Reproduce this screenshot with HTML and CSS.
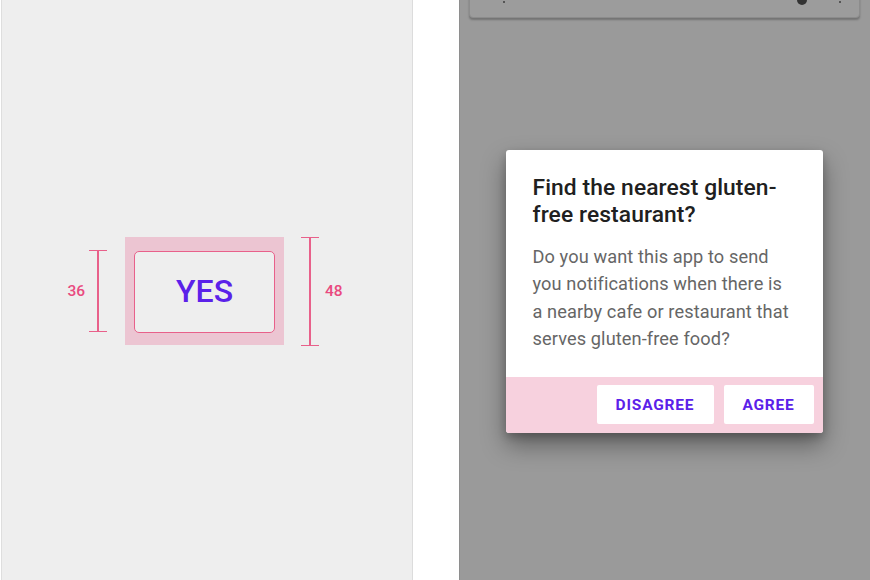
FILE: index.html
```html
<!DOCTYPE html>
<html>
<head>
<meta charset="utf-8">
<link rel="stylesheet" href="styles.css">
</head>
<body>
<div class="page">
  <section class="left">
    <div class="spec">
      <div class="measure m36">
        <span class="label">36</span>
        <div class="bracket b36"></div>
      </div>
      <div class="target">
        <div class="yes">YES</div>
      </div>
      <div class="measure m48">
        <div class="bracket b48"></div>
        <span class="label">48</span>
      </div>
    </div>
  </section>
  <div class="gap"></div>
  <section class="right">
    <div class="searchbar">
      <span class="dot d1"></span>
      <span class="mic"></span>
      <span class="dot d2"></span>
    </div>
    <div class="dialog">
      <div class="dlg-body">
        <h1 class="title">Find the nearest gluten-free restaurant?</h1>
        <p class="text">Do you want this app to send you notifications when there is a nearby cafe or restaurant that serves gluten-free food?</p>
      </div>
      <div class="actions">
        <button class="btn btn-dis">DISAGREE</button>
        <button class="btn btn-agree">AGREE</button>
      </div>
    </div>
  </section>
</div>
</body>
</html>
```
FILE: styles.css
```css
* { box-sizing: border-box; }
html, body { margin: 0; padding: 0; }
body {
  width: 870px;
  height: 580px;
  overflow: hidden;
  background: #ffffff;
  font-family: Roboto, "Liberation Sans", sans-serif;
}
.page {
  display: flex;
  height: 580px;
}
.left {
  width: 412px;
  margin-left: 1px;
  background: #eeeeee;
  border-left: 1px solid #dedede;
  border-right: 1px solid #dcdcdc;
  display: flex;
  align-items: center;
  justify-content: center;
}
.spec {
  display: flex;
  align-items: center;
  margin-top: 2px;
  margin-left: -4px;
}
.measure {
  display: flex;
  align-items: center;
  gap: 4px;
}
.label {
  color: #e94a7f;
  font-size: 15.5px;
  font-weight: 500;
}
.bracket {
  width: 18px;
  border-top: 1.5px solid #e8608a;
  border-bottom: 1.5px solid #e8608a;
  background: linear-gradient(to right, transparent 8px, #e8608a 8px, #e8608a 9.5px, transparent 9.5px);
}
.b36 { height: 82px; }
.b48 { height: 109px; }
.m36 { margin-right: 18px; }
.m48 { margin-left: 17px; gap: 6px; }
.target {
  width: 159px;
  height: 108px;
  background: #ecc5d2;
  display: flex;
  align-items: center;
  justify-content: center;
  padding-top: 2px;
}
.yes {
  width: 141px;
  height: 82px;
  border: 1.5px solid #e8608a;
  border-radius: 5px;
  background: #eeeeee;
  color: #5b21e9;
  font-size: 32px;
  font-weight: 500;
  display: flex;
  align-items: center;
  justify-content: center;
  padding-bottom: 2px;
}
.gap { width: 46px; }
.right {
  flex: 1;
  background: #9a9a9a;
  border-left: 1px solid #8e8e8e;
  position: relative;
  display: flex;
  flex-direction: column;
  align-items: center;
}
.searchbar {
  width: 391px;
  height: 38px;
  margin-top: -20px;
  margin-left: -2px;
  background: #9c9c9c;
  border: 1px solid #8c8c8c;
  border-radius: 4px;
  box-shadow: 0 2px 2px rgba(0,0,0,0.25);
  position: relative;
  flex-shrink: 0;
}
.dot {
  position: absolute;
  width: 2px;
  height: 2px;
  background: #555;
  top: 20px;
}
.d1 { left: 33px; }
.d2 { left: 369px; }
.mic {
  position: absolute;
  left: 327px;
  top: 16px;
  width: 10px;
  height: 8px;
  border-radius: 0 0 5px 5px;
  background: #333;
}
.dialog {
  margin-top: 132px;
  margin-left: -2px;
  width: 317px;
  height: 283px;
  background: #ffffff;
  border-radius: 3px;
  box-shadow: 0 12px 24px rgba(0,0,0,0.38), 0 4px 8px rgba(0,0,0,0.2);
  display: flex;
  flex-direction: column;
  overflow: hidden;
}
.dlg-body {
  flex: 1;
  padding: 24px 27px 0 27px;
}
.title {
  margin: 0;
  font-size: 22.8px;
  font-weight: 500;
  line-height: 27px;
  color: #202020;
  letter-spacing: 0.1px;
  width: 260px;
}
.text {
  margin: 15px 0 0 0;
  font-size: 18.2px;
  line-height: 27.4px;
  color: #666666;
  letter-spacing: 0.1px;
}
.actions {
  height: 56px;
  background: #f7d1de;
  display: flex;
  justify-content: flex-end;
  align-items: flex-start;
  padding: 8px 9px 0 0;
  gap: 10px;
}
.btn {
  border: none;
  background: #ffffff;
  border-radius: 2px;
  height: 39px;
  color: #5b21e9;
  font-family: Roboto, "Liberation Sans", sans-serif;
  font-size: 15.5px;
  font-weight: 700;
  letter-spacing: 0.8px;
  padding: 0;
}
.btn-dis { width: 117px; }
.btn-agree { width: 90px; }
```
